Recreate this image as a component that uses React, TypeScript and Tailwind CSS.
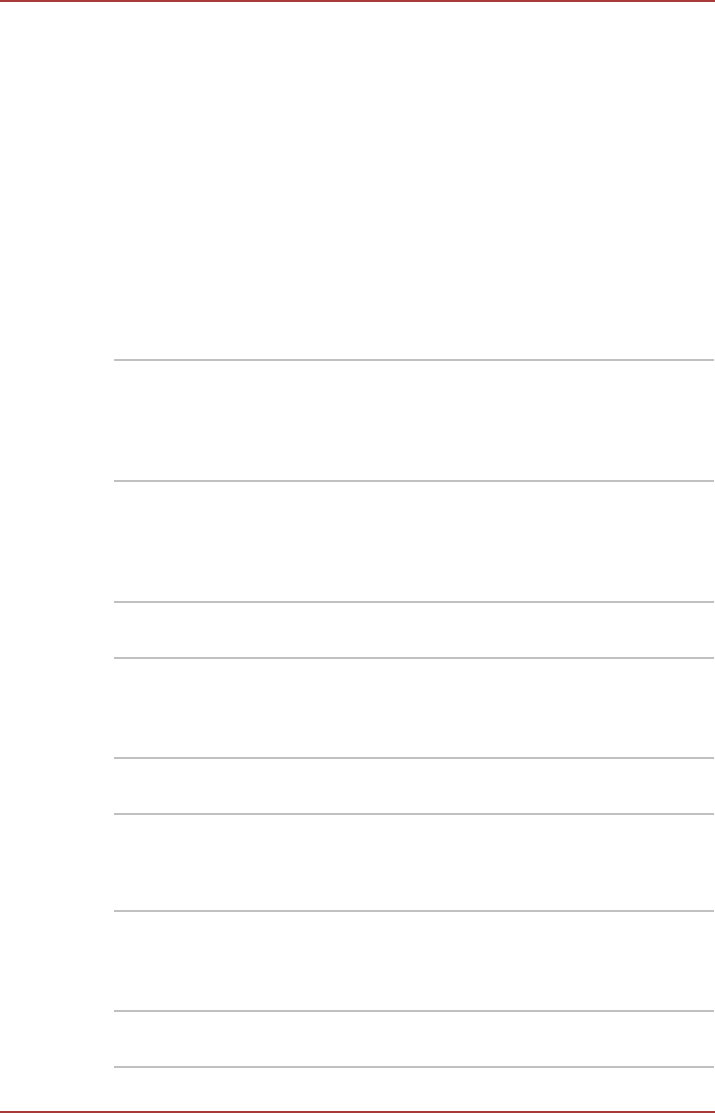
const rows = [121, 121, 56, 100, 56, 97, 100, 56];

export default function App() {
  return (
    <main className="flex h-[1113px] w-full flex-col bg-white">
      <div className="h-[2px] bg-[#a83a3a]" />
      <div className="flex flex-1 flex-col pl-[114px] pr-[1px] pt-[357px]">
        {rows.map((h, i) => (
          <div
            key={i}
            className="border-t-2 border-[#c0c0c0]"
            style={{ height: h }}
          />
        ))}
        <div className="border-t-2 border-[#c0c0c0]" />
      </div>
      <div className="mb-[0px] h-[2px] bg-[#a83a3a]" />
    </main>
  );
}
